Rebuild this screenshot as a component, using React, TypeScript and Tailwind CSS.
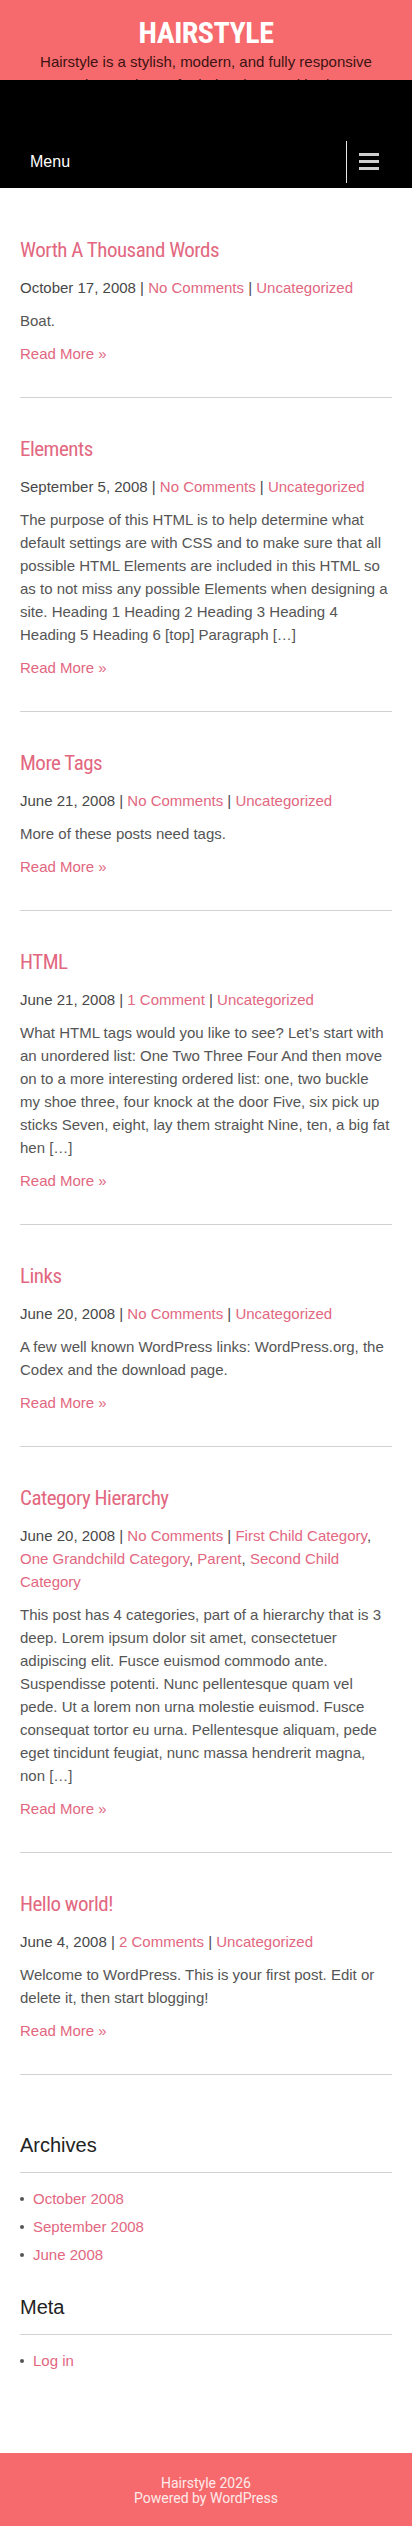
import React from "react";

const PINK = "text-[#e2677f]";

type Post = {
  title: string;
  date: string;
  comments: string;
  cats: string[];
  body: string;
};

const posts: Post[] = [
  {
    title: "Worth A Thousand Words",
    date: "October 17, 2008",
    comments: "No Comments",
    cats: ["Uncategorized"],
    body: "Boat.",
  },
  {
    title: "Elements",
    date: "September 5, 2008",
    comments: "No Comments",
    cats: ["Uncategorized"],
    body:
      "The purpose of this HTML is to help determine what default settings are with CSS and to make sure that all possible HTML Elements are included in this HTML so as to not miss any possible Elements when designing a site. Heading 1 Heading 2 Heading 3 Heading 4 Heading 5 Heading 6 [top] Paragraph […]",
  },
  {
    title: "More Tags",
    date: "June 21, 2008",
    comments: "No Comments",
    cats: ["Uncategorized"],
    body: "More of these posts need tags.",
  },
  {
    title: "HTML",
    date: "June 21, 2008",
    comments: "1 Comment",
    cats: ["Uncategorized"],
    body:
      "What HTML tags would you like to see? Let’s start with an unordered list: One Two Three Four And then move on to a more interesting ordered list: one, two buckle my shoe three, four knock at the door Five, six pick up sticks Seven, eight, lay them straight Nine, ten, a big fat hen […]",
  },
  {
    title: "Links",
    date: "June 20, 2008",
    comments: "No Comments",
    cats: ["Uncategorized"],
    body: "A few well known WordPress links: WordPress.org, the Codex and the download page.",
  },
  {
    title: "Category Hierarchy",
    date: "June 20, 2008",
    comments: "No Comments",
    cats: ["First Child Category", "One Grandchild Category", "Parent", "Second Child Category"],
    body:
      "This post has 4 categories, part of a hierarchy that is 3 deep. Lorem ipsum dolor sit amet, consectetuer adipiscing elit. Fusce euismod commodo ante. Suspendisse potenti. Nunc pellentesque quam vel pede. Ut a lorem non urna molestie euismod. Fusce consequat tortor eu urna. Pellentesque aliquam, pede eget tincidunt feugiat, nunc massa hendrerit magna, non […]",
  },
  {
    title: "Hello world!",
    date: "June 4, 2008",
    comments: "2 Comments",
    cats: ["Uncategorized"],
    body: "Welcome to WordPress. This is your first post. Edit or delete it, then start blogging!",
  },
];

function Bullet({ children }: { children: React.ReactNode }) {
  return (
    <li className="flex items-center h-[28px]">
      <span className="w-[4px] h-[4px] rounded-full bg-[#555] mr-[9px]" />
      <a className={`${PINK} text-[15px]`}>{children}</a>
    </li>
  );
}

export default function App() {
  return (
    <div className="w-[412px] bg-white font-['Liberation_Sans',Arial,sans-serif]">
      <header className="h-[80px] overflow-hidden bg-[#f66a6d] text-center">
        <h1 className="pt-[16px] text-[30px] leading-[34px] font-bold text-white font-['Roboto_Condensed','Roboto',sans-serif] font-stretch-condensed tracking-[-0.5px]">
          HAIRSTYLE
        </h1>
        <p className="text-[15px] leading-[23px] text-[#3d1212] px-[20px]">
          Hairstyle is a stylish, modern, and fully responsive WordPress theme for hair salons and barbers.
        </p>
      </header>
      <nav className="bg-black pt-[60px] pb-[5px]">
        <div className="flex items-center h-[43px]">
          <span className="pl-[30px] text-white text-[16px]">Menu</span>
          <span className="ml-auto w-px h-[42px] bg-[#e5e5e5]" />
          <span className="ml-[12px] mr-[33px] w-[20px] flex flex-col gap-[4px]">
            <span className="h-[3px] bg-[#cfcfcf]" />
            <span className="h-[3px] bg-[#cfcfcf]" />
            <span className="h-[3px] bg-[#cfcfcf]" />
          </span>
        </div>
      </nav>
      <main className="px-[20px] pt-[11px]">
        {posts.map((p) => (
          <article key={p.title} className="pt-[37px]">
            <h2
              className={`${PINK} text-[21px] leading-[28px] font-['Roboto_Condensed','Roboto',sans-serif] font-stretch-condensed tracking-[-0.5px]`}
            >
              {p.title}
            </h2>
            <div className="mt-[12px] text-[15px] leading-[23px] text-[#484848]">
              {p.date} | <a className={PINK}>{p.comments}</a> |{" "}
              {p.cats.map((c, i) => (
                <React.Fragment key={c}>
                  <a className={PINK}>{c}</a>
                  {i < p.cats.length - 1 ? ", " : ""}
                </React.Fragment>
              ))}
            </div>
            <p className="mt-[10px] text-[15px] leading-[23px] text-[#555]">{p.body}</p>
            <a className={`block mt-[10px] text-[15px] leading-[23px] ${PINK}`}>Read More »</a>
            <hr className="mt-[32px] border-0 h-px bg-[#d2d2d2]" />
          </article>
        ))}
        <section className="mt-[57px]">
          <h3 className="text-[20px] leading-[26px] text-[#222]">Archives</h3>
          <hr className="mt-[14px] border-0 h-px bg-[#d2d2d2]" />
          <ul className="mt-[12px]">
            <Bullet>October 2008</Bullet>
            <Bullet>September 2008</Bullet>
            <Bullet>June 2008</Bullet>
          </ul>
        </section>
        <section className="mt-[25px] mb-[78px]">
          <h3 className="text-[20px] leading-[26px] text-[#222]">Meta</h3>
          <hr className="mt-[14px] border-0 h-px bg-[#d2d2d2]" />
          <ul className="mt-[12px]">
            <Bullet>Log in</Bullet>
          </ul>
        </section>
      </main>
      <footer className="h-[74px] bg-[#f66a6d] pt-[23px] text-center text-[14px] leading-[15px] text-[#fdeaea] font-['Roboto',sans-serif]">
        <div>Hairstyle 2026</div>
        <div>Powered by WordPress</div>
      </footer>
    </div>
  );
}
